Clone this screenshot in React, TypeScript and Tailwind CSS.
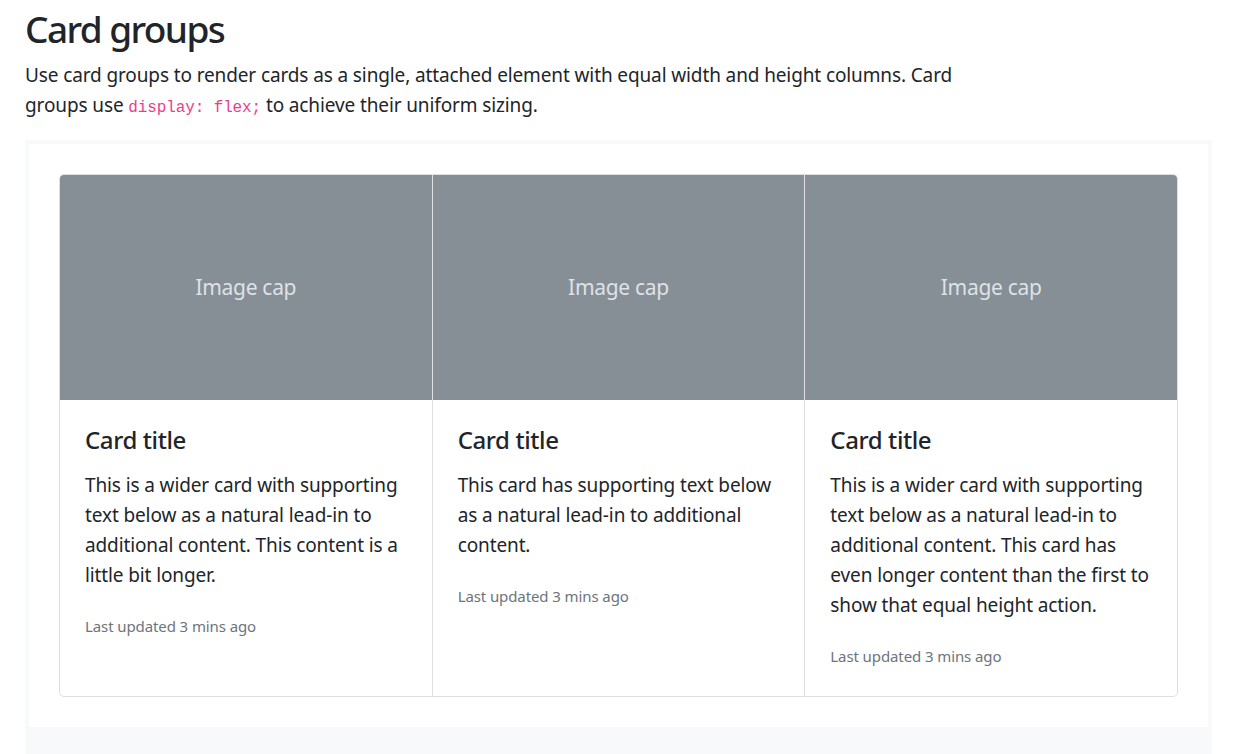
const cards = [
  {
    text: "This is a wider card with supporting text below as a natural lead-in to additional content. This content is a little bit longer.",
  },
  {
    text: "This card has supporting text below as a natural lead-in to additional content.",
  },
  {
    text: "This is a wider card with supporting text below as a natural lead-in to additional content. This card has even longer content than the first to show that equal height action.",
  },
];

function Card({ text, index }: { text: string; index: number }) {
  const first = index === 0;
  const last = index === cards.length - 1;
  return (
    <div
      className={
        "flex flex-1 flex-col border-[#dfdfdf] bg-white " +
        (first ? "rounded-l-[5px] border " : "border-y border-r ") +
        (last ? "rounded-r-[5px]" : "")
      }
    >
      <div
        className={
          "flex h-[225px] items-center justify-center bg-[#868e96] text-[21px] tracking-[-0.3px] text-[#dee2e6] " +
          (first ? "rounded-tl-[4px] " : "") +
          (last ? "rounded-tr-[4px]" : "")
        }
      >
        Image cap
      </div>
      <div className="p-[25px]">
        <h5 className="mb-[15px] text-[24px] font-medium leading-[30px] tracking-[-0.4px] text-[#212529]">
          Card title
        </h5>
        <p className="mb-[20px] text-[19px] leading-[30px] tracking-[-0.12px] text-[#212529]">{text}</p>
        <p className="text-[19px] leading-[30px]">
          <small className="text-[15px] tracking-[-0.1px] text-[#6c757d]">Last updated 3 mins ago</small>
        </p>
      </div>
    </div>
  );
}

export default function App() {
  return (
    <div
      className="h-[754px] overflow-hidden bg-white pl-[25px] pr-[28px] pt-[8px] text-[#212529]"
      style={{ fontFamily: '"Noto Sans", "Open Sans", sans-serif' }}
    >
      <h2 className="mb-[10px] text-[37px] font-medium leading-[42px] tracking-[-1.6px]">Card groups</h2>
      <p className="mb-[20px] max-w-[80%] text-[19px] leading-[30px] tracking-[-0.12px]">
        Use card groups to render cards as a single, attached element with equal width and height columns. Card
        groups use{" "}
        <code
          className="text-[16px] leading-none text-[#e83e8c]"
          style={{ fontFamily: '"Liberation Mono", "DejaVu Sans Mono", monospace' }}
        >
          display: flex;
        </code>{" "}
        to achieve their uniform sizing.
      </p>
      <div className="border-4 border-[#f8f9fa] p-[30px]">
        <div className="flex">
          {cards.map((c, i) => (
            <Card key={i} text={c.text} index={i} />
          ))}
        </div>
      </div>
      <div className="relative h-[60px] bg-[#f8f9fa]">
        <button
          className="absolute right-[13px] top-[13px] px-[10px] py-[5px] text-[15px] leading-[20px] text-[#818a91]"
          style={{ fontFamily: '"Noto Sans", sans-serif' }}
        >
          Copy
        </button>
      </div>
    </div>
  );
}
